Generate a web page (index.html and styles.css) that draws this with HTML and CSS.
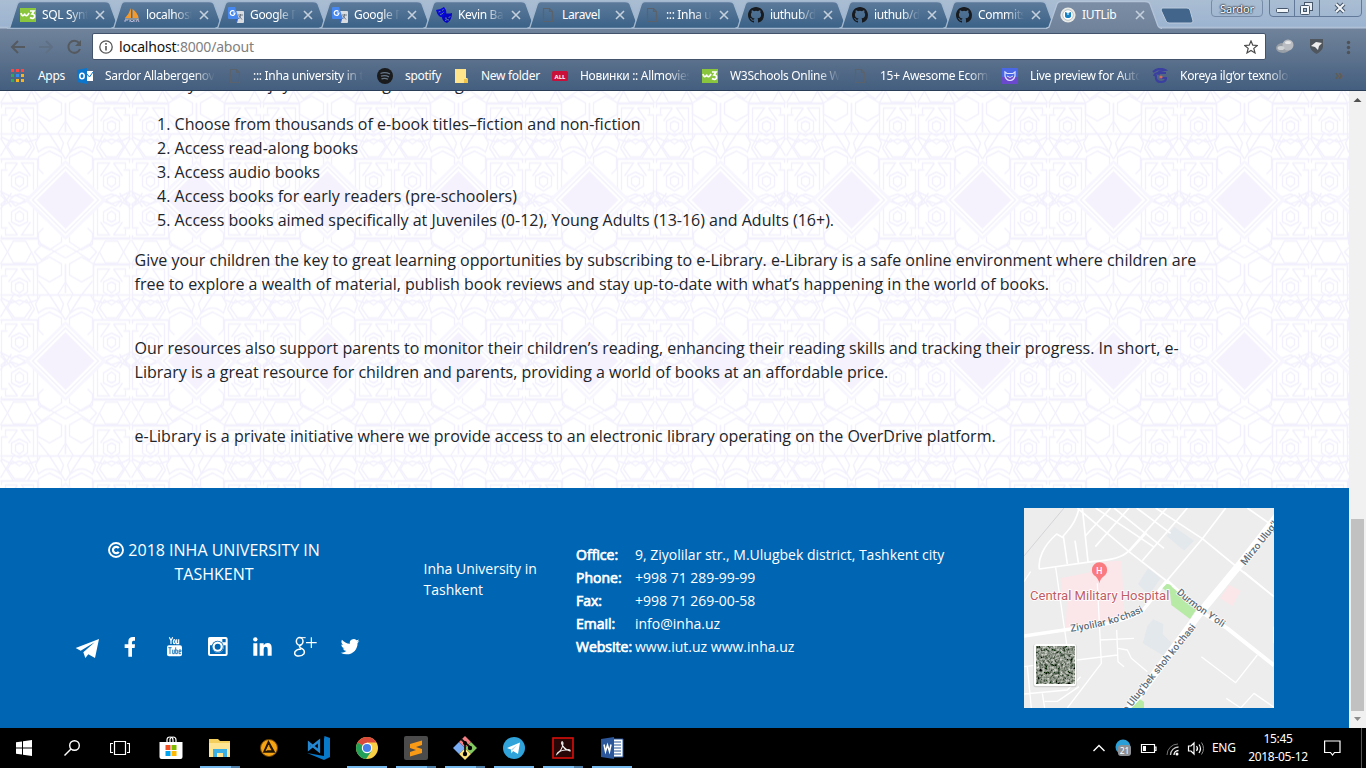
FILE: index.html
```html
<!DOCTYPE html>
<html lang="en">
<head>
<meta charset="utf-8">
<title>IUTLib</title>
<link rel="stylesheet" href="styles.css">
</head>
<body>
<svg class="defs" width="0" height="0">
  <defs>
    <linearGradient id="tabfill" x1="0" y1="0" x2="0" y2="1"><stop offset="0" stop-color="#5d7b9b"/><stop offset="1" stop-color="#3a6187"/></linearGradient>
    <linearGradient id="activefill" x1="0" y1="0" x2="0" y2="1"><stop offset="0" stop-color="#7c8ea5"/><stop offset="1" stop-color="#70839b"/></linearGradient>
    <symbol id="tab" viewBox="0 0 118 29"><path d="M1 28.5 L4 27 L11 5 Q12 1.500 15 1.500 L99 1.500 Q103 1.500 104 4 L112 26 Q113 28 116 28.500Z" fill="url(#tabfill)" stroke="#a3b8ce" stroke-width="1.300"/></symbol>
    <symbol id="tab-on" viewBox="0 0 118 29"><path d="M0 29 L3 27 L11 4 Q12 1.500 15 1.500 L99 1.500 Q103 1.500 104 4 L112 26 Q113 28 116 29Z" fill="url(#activefill)"/><path d="M0 28.500 L3 27 L11 4 Q12 1.500 15 1.500 L99 1.500 Q103 1.500 104 4 L112 26 Q113 28 116 28.500" fill="none" stroke="#b4c4d8" stroke-width="1.300"/></symbol>
    <symbol id="close" viewBox="0 0 10 10"><path d="M1 1 L9 9 M9 1 L1 9" stroke="#c3cfdc" stroke-width="1.600"/></symbol>
    <symbol id="w3" viewBox="0 0 16 16"><rect y="1" width="16" height="14" fill="#8ac53e"/><path d="M1 6 Q2 10 4 8 Q5 6 5 8 Q7 10 9 6" fill="none" stroke="#fff" stroke-width="1.700"/><path d="M10 4 H14 L12 7 Q15 7 14.500 10 Q13 12.500 10 10.500" fill="none" stroke="#fff" stroke-width="1.700"/></symbol>
    <symbol id="pma" viewBox="0 0 16 16"><path d="M7 1 V11 H1 Q5 7 7 1Z M8.500 2 Q14 6 14.500 11 H8.500Z" fill="#f29a2e"/><path d="M1 12 h14" stroke="#c8b7a4" stroke-width="1"/><path d="M1 15 v-2 h3 M6 15 v-2 l2 2 l2-2 v2 M12 15 l1.500-3 l1.500 3" stroke="#b9b7d6" fill="none"/></symbol>
    <symbol id="translate" viewBox="0 0 16 16"><path d="M7 4 H15 Q16 4 16 5 V15 Q16 16 15 16 H9Z" fill="#d9dce0"/><path d="M1 0 H7 L11 12 H1 Q0 12 0 11 V1 Q0 0 1 0Z" fill="#4687f0"/><path d="M10 12 L9 16 L7.500 12Z" fill="#2b5fc0"/><path d="M6.500 4.500 A2.400 2.400 0 1 0 7 6 H5" fill="none" stroke="#fff" stroke-width="1.200"/><path d="M10 8 h5 M12.500 7 v1 Q12.500 11 10.500 12 M11 9 L14 12.500" fill="none" stroke="#68727e" stroke-width=".9"/></symbol>
    <symbol id="masks" viewBox="0 0 16 16"><path d="M0 3 Q4 3 8 0 Q12 5 9 10 Q5 11 3 9 Q1 7 0 3Z" fill="#0808d8"/><path d="M9 6 Q12 7 16 6 Q16 13 11 16 Q6 14 6 10 Q9 10 9 6Z" fill="#0404c2"/><path d="M2.500 5 l2-.6 M6 3.500 l1.600-1 M4 7.500 Q6 7.500 7.500 5.500 M9 11 l2 .3 M12.500 10.500 l2-.8 M9 13.500 q2-1.500 4-.5" stroke="#5c7d9e" stroke-width="1" fill="none"/></symbol>
    <symbol id="page" viewBox="0 0 16 16"><path d="M3.500 1.500 H9.500 L12.500 4.500 V14.500 H3.500Z M9.500 1.500 V4.500 H12.500" fill="none" stroke="#5a636d" stroke-width="1.200"/></symbol>
    <symbol id="github" viewBox="0 0 16 16"><path d="M8 0C3.580 0 0 3.580 0 8c0 3.540 2.290 6.530 5.470 7.590.4.070.55-.17.55-.38 0-.19-.01-.82-.01-1.490-2.010.37-2.530-.49-2.690-.94-.09-.23-.48-.94-.82-1.130-.28-.15-.68-.52-.01-.53.63-.01 1.080.58 1.230.82.72 1.210 1.870.87 2.330.66.07-.52.28-.87.51-1.070-1.780-.2-3.640-.89-3.640-3.950 0-.87.31-1.590.82-2.150-.08-.2-.36-1.020.08-2.120 0 0 .67-.21 2.200.82a7.600 7.600 0 0 1 4 0c1.530-1.040 2.200-.82 2.200-.82.44 1.100.16 1.920.08 2.120.51.56.82 1.270.82 2.150 0 3.070-1.870 3.750-3.650 3.950.29.25.54.73.54 1.480 0 1.070-.01 1.930-.01 2.200 0 .21.15.46.55.38A8 8 0 0 0 16 8c0-4.420-3.580-8-8-8z" fill="#171a1e"/></symbol>
    <symbol id="iut" viewBox="0 0 16 16"><circle cx="8" cy="8" r="7.600" fill="#e9e9e6"/><circle cx="8" cy="8" r="5.300" fill="#fff" stroke="#b7c0c4"/><path d="M5 5 L8 6 L11 5 V9 Q11 11 8 11 Q5 11 5 9Z" fill="#1682c4"/><path d="M8 5v3" stroke="#fff"/></symbol>
    <pattern id="girih" width="131" height="161" patternUnits="userSpaceOnUse" patternTransform="translate(0 28.500)">
      <g transform="translate(65.500 80.500)" fill="none" stroke="#f2f0fc" stroke-width="1.400">
        <g id="row">
          <g id="gq">
            <path d="M4 -97 L4 -86 L16 -79 L28 -86 V-97 L16 -104Z"/>
            <path d="M7 -66 H25 L30 -57 L27 -48 Q16 -58 5 -48 L2 -57Z"/>
            <path d="M4 -35 V-43 L16 -49 L27 -43 V-31 L22 -26 M4 37 V42 L16 50 L27 44 V33 L22 28"/>
            <path d="M34 52 L40 41 H52 L58 52 L52 63 H40Z M34 -53 L39 -61 L46 -56 L53 -61 L58 -53 L51 -43 H41Z"/>
            <g id="box"><path d="M46 -28 L54 -24 V-14 L46 -9 L38 -14 V-24Z M46 -24 L50 -22 V-16 L46 -13 L42 -16 V-22Z M28 -6 V-41 H64 V-37 M64 -5 V-30 H58 M32 -10 V-37 H44 L35 -24 M48 -37 H60 V-31 M57 -24 L48 -37 M28 -6 L38 -3 L46 -6 L54 -3 L64 -8"/></g>
            <use href="#box" transform="scale(1 -1) translate(0 2)"/>
            <use href="#box" transform="translate(0 -55)"/>
            <path d="M0 -66 H65 M0 -41 L7 -52 L16 -66 L27 -80 M0 -79 L8 -66 M28 -41 H65 M28 38 H65 M28 64 H65 M0 -97 V-68 M28 38 L24 45 L31 52 L24 60 L12 52 L0 45 M0 58 L24 44 M28 64 L34 52 M58 52 L65 40 M58 52 L65 64 M31 -52 L38 -66 M31 -52 L38 -41 M52 -41 L65 -62 M52 -66 L65 -44"/>
            <path d="M40 0 L50 -5 L56 0 L50 6Z M54 -7 L65 9 M54 7 L65 -9 M60 0 l5 -5 M60 0 l5 5"/>
          </g>
          <use href="#gq" transform="scale(-1 1)"/>
        </g>
        <use href="#row" transform="translate(0 161)"/>
        <path d="M-41 0 L0 -40 L41 0 L0 40Z" fill="#f7f5fe" stroke="none"/>
        <path d="M-35 0 L0 -35 L35 0 L0 35Z" fill="#fff" stroke="#fff" stroke-width="2"/>
        <path d="M-33 0 L0 -33 L33 0 L0 33Z" fill="#fff"/>
        <path d="M-29 0 L0 -29 L29 0 L0 29Z" fill="#f5f2fe" stroke="none"/>
      </g>
    </pattern>
  </defs>
</svg>

<header class="browser">
  <div class="tabstrip">
    <div class="tab"><svg class="shape"><use href="#tab"/></svg><svg class="fav"><use href="#w3"/></svg><span class="t">SQL Syntax</span><svg class="x"><use href="#close"/></svg></div>
    <div class="tab"><svg class="shape"><use href="#tab"/></svg><svg class="fav"><use href="#pma"/></svg><span class="t">localhost</span><svg class="x"><use href="#close"/></svg></div>
    <div class="tab"><svg class="shape"><use href="#tab"/></svg><svg class="fav"><use href="#translate"/></svg><span class="t">Google П</span><svg class="x"><use href="#close"/></svg></div>
    <div class="tab"><svg class="shape"><use href="#tab"/></svg><svg class="fav"><use href="#translate"/></svg><span class="t">Google П</span><svg class="x"><use href="#close"/></svg></div>
    <div class="tab"><svg class="shape"><use href="#tab"/></svg><svg class="fav"><use href="#masks"/></svg><span class="t">Kevin Bac</span><svg class="x"><use href="#close"/></svg></div>
    <div class="tab"><svg class="shape"><use href="#tab"/></svg><svg class="fav"><use href="#page"/></svg><span class="t whole">Laravel</span><svg class="x"><use href="#close"/></svg></div>
    <div class="tab"><svg class="shape"><use href="#tab"/></svg><svg class="fav"><use href="#page"/></svg><span class="t">::: Inha un</span><svg class="x"><use href="#close"/></svg></div>
    <div class="tab"><svg class="shape"><use href="#tab"/></svg><svg class="fav"><use href="#github"/></svg><span class="t">iuthub/db</span><svg class="x"><use href="#close"/></svg></div>
    <div class="tab"><svg class="shape"><use href="#tab"/></svg><svg class="fav"><use href="#github"/></svg><span class="t">iuthub/db</span><svg class="x"><use href="#close"/></svg></div>
    <div class="tab"><svg class="shape"><use href="#tab"/></svg><svg class="fav"><use href="#github"/></svg><span class="t">Commits</span><svg class="x"><use href="#close"/></svg></div>
    <div class="tab on"><svg class="shape"><use href="#tab-on"/></svg><svg class="fav"><use href="#iut"/></svg><span class="t whole">IUTLib</span><svg class="x"><use href="#close"/></svg></div>
    <svg class="newtab" width="34" height="18"><path d="M2 1 H27 Q29 1 30 3 L33 14 Q33 16 31 16 H9 Q7 16 6 14 L1 3Z" fill="#41658b" stroke="#bccbdc"/></svg>
    <div class="user">Sardor</div>
    <svg class="winbtns" width="94" height="18">
      <path d="M.5 0 V13 Q.5 16.500 4 16.500 H89 Q92.500 16.500 92.500 13 V0 M25.500 0 V16 M50.500 0 V16" fill="none" stroke="#63799a"/>
      <rect x="7.500" y="8.500" width="12" height="4" rx="1" fill="#f3f6f9" stroke="#46566b"/>
      <rect x="35.500" y="2.500" width="8" height="8" fill="#e9eff5" stroke="#46566b"/><rect x="31.500" y="5.500" width="9" height="9" rx="1" fill="#f3f6f9" stroke="#46566b"/><rect x="34.500" y="8.500" width="3" height="3" fill="#9db2cb" stroke="#46566b"/>
      <path d="M67 4 L75 12 M75 4 L67 12" stroke="#46566b" stroke-width="4"/><path d="M67 4 L75 12 M75 4 L67 12" stroke="#f3f6f9" stroke-width="2"/>
    </svg>
  </div>
  <div class="toolbar">
    <svg class="nav" width="92" height="34" fill="none" stroke-width="2"><path d="M25 19 H12 M18 13 L12 19 L18 25" stroke="#555a60"/><path d="M39 19 H52 M46 13 L52 19 L46 25" stroke="#5f7085"/><path d="M79 15 A6 6 0 1 0 80 21" stroke="#555a60"/><path d="M81 12 V18 H75Z" fill="#555a60"/></svg>
    <div class="omnibox">
      <svg width="14" height="14"><circle cx="7" cy="7" r="6.200" fill="none" stroke="#555" stroke-width="1.300"/><path d="M7 6 V10.500 M7 3 V4.700" stroke="#555" stroke-width="1.600"/></svg>
      <span class="url">localhost<i>:8000/about</i></span>
      <svg width="14" height="14"><path d="M7 1 L8.800 5.200 L13.300 5.500 L9.800 8.400 L11 12.900 L7 10.400 L3 12.900 L4.200 8.400 L.7 5.500 L5.200 5.200Z" fill="none" stroke="#4a4a4a" stroke-width="1.200"/></svg>
    </div>
    <svg class="ext" width="100" height="34"><ellipse cx="17" cy="20" rx="7" ry="5" fill="#999fa6"/><circle cx="22" cy="17" r="5.500" fill="#b9bcc0"/><ellipse cx="22" cy="14.500" rx="3" ry="1.600" fill="#e6e7e8"/><ellipse cx="15" cy="20" rx="3.500" ry="2" fill="#d0d3d6"/><path d="M44 11 H57 V19 Q56 23 50.500 26 Q45 23 44 19Z" fill="#4f565e"/><path d="M45 18 L50 14 L56 15 L53 18 L52 22 L49 19Z" fill="#eee"/><g fill="#4f5256"><circle cx="82.500" cy="14.500" r="1.700"/><circle cx="82.500" cy="19.500" r="1.700"/><circle cx="82.500" cy="24.500" r="1.700"/></g></svg>
  </div>
  <nav class="bookmarks">
    <a class="bm w-apps"><svg class="fav"><g transform="translate(1 1)"><path d="M0 0h3v3H0z M5 0h3v3H5z M10 0h3v3h-3z" fill="#f44"/><path d="M0 5h3v3H0z M0 10h3v3H0z" fill="#35a853"/><path d="M5 5h3v3H5z" fill="#2f8df5"/><path d="M10 5h3v3h-3z M5 10h3v3H5z M10 10h3v3h-3z" fill="#f9b51c"/></g></svg><span class="whole">Apps</span></a>
    <a class="bm"><svg class="fav"><path d="M9 3h7v10H9z" fill="#fff"/><path d="M9 5 L12.500 9 L16 4" stroke="#0c76cc" fill="none"/><path d="M0 2 L10 0 V16 L0 14Z" fill="#0c76cc"/><ellipse cx="5" cy="8" rx="2.200" ry="2.800" fill="none" stroke="#fff" stroke-width="1.500"/></svg><span>Sardor Allabergenov</span></a>
    <a class="bm w-inha"><svg class="fav"><use href="#page"/></svg><span>::: Inha university in tas</span></a>
    <a class="bm w-spot"><svg class="fav"><circle cx="8" cy="8" r="8" fill="#191b1d"/><path d="M3.500 5.500 Q8 3.700 13 6 M4 8.200 Q8 6.800 12 8.800 M4.500 10.800 Q8 9.700 11 11.300" fill="none" stroke="#687788" stroke-width="1.300"/></svg><span class="whole">spotify</span></a>
    <a class="bm w-fold"><svg class="fav"><path d="M0 1 H11 V10 H12.500 V15 H0Z" fill="#ffe48b"/><path d="M9 11h4v4H9z" fill="#efc34a"/></svg><span class="whole">New folder</span></a>
    <a class="bm"><svg class="fav"><rect y="3" width="16" height="10" rx="1.500" fill="#c8103a"/><text x="8" y="10.500" text-anchor="middle" class="alltxt">ALL</text></svg><span>Новинки :: Allmovies</span></a>
    <a class="bm"><svg class="fav"><use href="#w3"/></svg><span>W3Schools Online We</span></a>
    <a class="bm"><svg class="fav"><use href="#page"/></svg><span>15+ Awesome Ecomm</span></a>
    <a class="bm"><svg class="fav"><rect width="16" height="16" fill="#4a68e6"/><path d="M0 9h16v7H0z" fill="#6b49cf"/><path d="M3 4 L5 5.500 H11 L13 4 V8 Q12 12 8 12.500 Q4 12 3 8Z" fill="none" stroke="#dde2ff" stroke-width="1.200"/><path d="M5 8 Q8 11 11 8" stroke="#dde2ff" fill="none"/></svg><span>Live preview for Autop</span></a>
    <a class="bm w-kor"><svg class="fav"><path d="M1 4 Q7 -1 13 2 Q7 3 6 5 H14 M2 8 Q3 4 8 6 M4 7 Q3 14 9 14 Q14 14 14 10 H8" fill="none" stroke="#3a3fa0" stroke-width="2.200"/><circle cx="9" cy="9" r="1.600" fill="#d66a55"/></svg><span>Koreya ilg‘or texnolog</span></a>
    <b class="more">»</b>
  </nav>
</header>

<main class="viewport">
  <div class="page">
    <section class="content">
      <svg class="bg" width="1349" height="397"><rect width="1349" height="397" fill="url(#girih)"/></svg>
      <div class="text">
        <p class="cut">Online you can enjoy the following advantages:</p>
        <ol>
          <li>Choose from thousands of e-book titles–fiction and non-fiction</li>
          <li>Access read-along books</li>
          <li>Access audio books</li>
          <li>Access books for early readers (pre-schoolers)</li>
          <li>Access books aimed specifically at Juveniles (0-12), Young Adults (13-16) and Adults (16+).</li>
        </ol>
        <p>Give your children the key to great learning opportunities by subscribing to e-Library. e-Library is a safe online environment where children are<br>free to explore a wealth of material, publish book reviews and stay up-to-date with what’s happening in the world of books.</p>
        <p>Our resources also support parents to monitor their children’s reading, enhancing their reading skills and tracking their progress. In short, e-<br>Library is a great resource for children and parents, providing a world of books at an affordable price.</p>
        <p>e-Library is a private initiative where we provide access to an electronic library operating on the OverDrive platform.</p>
      </div>
    </section>
    <footer class="footer">
      <div class="f-left">
        <div class="copy"><svg width="16" height="16" viewBox="0 0 16 16"><circle cx="8" cy="8" r="7" fill="none" stroke="#fff" stroke-width="1.900"/><path d="M10.800 6.200 A3.200 3.200 0 1 0 10.800 9.800" fill="none" stroke="#fff" stroke-width="2.200"/></svg> 2018 INHA UNIVERSITY IN<br>TASHKENT</div>
        <svg class="social" width="300" height="24" viewBox="45 315 900 72" fill="#fff">
          <path d="M47 354 L117 327 L105 384 L85 373 L76 384 L70 367 L104 337 L62 362Z"/>
          <path d="M205 380 V354 H194 V343 H205 V335 Q205 321 219 321 H225 V332 H220 Q216 332 216 337 V343 H225 L224 354 H216 V380Z"/>
          <g fill="none" stroke="#fff" stroke-width="3.500"><path d="M328 322 L333 332 L338 322 M333 331 V342"/><ellipse cx="343" cy="335" rx="3" ry="6"/><path d="M350 328 V341 H356 V328"/></g>
          <rect x="321" y="346" width="45" height="33" rx="6"/>
          <path d="M325 353 H335 M330 353 V372 M338 359 V371 H343 V359 M347 352 V371 H352 V360 H347 M363 371 H357 V360 H363 V365 H357" fill="none" stroke="#0066b3" stroke-width="2.500"/>
          <path fill-rule="evenodd" d="M449 321 H497 Q503 321 503 327 V372 Q503 378 497 378 H450 Q444 378 444 372 V327 Q444 321 449 321Z M487 327 V337 H497 V327Z M450 346 V372 H497 V346 H491 A18 18 0 1 1 456 346Z"/><circle cx="473" cy="350" r="18" fill="#0066b3"/><circle cx="473" cy="350" r="15.500"/><circle cx="473" cy="350" r="9" fill="#0066b3"/>
          <circle cx="586" cy="328" r="6.500"/><path d="M580 340 H592 V377 H580Z M599 340 H611 V346 Q615 339 623 339 Q635 339 635 354 V377 H623 V357 Q623 350 617 350 Q611 350 611 357 V377 H599Z"/>
          <g fill="none" stroke="#fff"><ellipse cx="719" cy="334" rx="10" ry="11.500" stroke-width="4.500"/><path d="M718 323 H737" stroke-width="3"/><path d="M724 344 Q712 350 726 356 Q736 362 732 371 Q724 380 712 378 Q701 375 705 365 Q711 357 724 357" stroke-width="4.500"/><path d="M738 338 H770 M754 322 V354" stroke-width="3.500"/></g>
          <path transform="translate(842 322) scale(2.350)" d="M23.950 4.570a10 10 0 0 1-2.820.78 4.960 4.960 0 0 0 2.160-2.720c-.95.550-2 .96-3.130 1.180a4.920 4.920 0 0 0-8.380 4.480C7.690 8.100 4.070 6.130 1.640 3.160a4.820 4.820 0 0 0-.67 2.480c0 1.710.87 3.210 2.190 4.100a4.900 4.900 0 0 1-2.230-.62v.06a4.920 4.920 0 0 0 3.950 4.830 5 5 0 0 1-2.210.08 4.940 4.940 0 0 0 4.600 3.420A9.870 9.870 0 0 1 0 19.540a13.990 13.990 0 0 0 7.550 2.210c9.050 0 14-7.500 14-13.980 0-.21 0-.42-.02-.63a9.940 9.940 0 0 0 2.420-2.570z"/>
        </svg>
      </div>
      <div class="f-name">Inha University in<br>Tashkent</div>
      <dl class="f-contact">
        <dt>Office:</dt><dd>9, Ziyolilar str., M.Ulugbek district, Tashkent city</dd>
        <dt>Phone:</dt><dd>+998 71 289-99-99</dd>
        <dt>Fax:</dt><dd>+998 71 269-00-58</dd>
        <dt>Email:</dt><dd>info@inha.uz</dd>
        <dt>Website:</dt><dd>www.iut.uz www.inha.uz</dd>
      </dl>
      <svg class="map" width="250" height="200" viewBox="30 24 750 600">
        <defs><filter id="sat" x="0" y="0" width="1" height="1"><feTurbulence type="fractalNoise" baseFrequency=".13" numOctaves="3" seed="4"/><feColorMatrix values="1.300 0 0 0 -.31  1.250 0 0 0 -.25  1.250 0 0 0 -.3  0 0 0 0 1"/><feComponentTransfer><feFuncR type="gamma" exponent="1.300"/><feFuncG type="gamma" exponent="1.300"/><feFuncB type="gamma" exponent="1.300"/></feComponentTransfer></filter></defs>
        <rect x="30" y="24" width="750" height="600" fill="#eeeded"/>
        <path d="M140 235 L222 218 L270 185 L322 182 L332 350 L260 372 L155 385 L160 290 H145Z" fill="#fbe6ea"/>
        <path d="M645 255 L680 272 L655 318 L618 295Z" fill="#fbe6ea"/>
        <path d="M480 80 L540 122 L510 152 L458 108Z M402 205 L440 235 L405 285 L372 252Z M418 358 L448 372 L446 402 L475 432 L450 468 L386 430 L400 378Z" fill="#e3e8ed"/>
        <path d="M150 24 L30 168" stroke="#d2d4d8" stroke-width="3"/>
        <g fill="none" stroke="#fff" stroke-width="5" stroke-linejoin="round">
          <path d="M190 24 L345 155 L458 243 M195 24 C185 80 150 100 145 112 L128 102 C85 140 72 180 76 207 L240 184 Q320 180 345 152 L458 24 M205 24 L222 185 M148 108 L160 192 M183 122 L193 188" />
          <path d="M214 108 L290 24 M244 140 L345 24 M245 24 L418 140 M300 24 L450 145 M368 24 L470 100 M385 182 L520 24 M345 155 L398 98 M425 24 L565 116 L665 198 L780 290 M565 116 L635 24 M565 116 L458 243 M700 24 L780 80"/>
          <path d="M125 202 L158 432 M250 250 L262 490 L160 624 M30 500 L310 465 M30 582 L160 570 L200 530 M158 430 L140 470 M40 500 L52 624 M258 420 L360 415 M308 390 L312 485 L330 500 M312 445 L340 450 L352 475 L400 515 M85 580 L92 624 M92 604 H130 L195 560" stroke-width="4"/>
          <path d="M562 470 L665 548 L730 465 M637 595 L680 624 M680 624 L720 580 L780 622 M780 380 V430 M30 245 L50 215 M690 215 L780 290" stroke-width="4"/>
          <path d="M30 408 L170 387 Q330 370 385 333 L458 243" stroke-width="10"/>
          <path d="M458 243 L560 335 L640 385 L780 496" stroke-width="12"/>
          <path d="M335 640 L550 348 L680 190 L790 48" stroke-width="23"/>
        </g>
        <path d="M445 265 L458 252 Q468 250 475 262 L549 325 L528 357 L472 315 L468 280Z M352 624 L378 598 L390 606 V624Z" fill="#b7eaa4"/>
        <path d="M256 250 Q252 233 240 226 A23 23 0 1 1 273 226 Q259 235 256 250Z" fill="#f97b80"/>
        <text class="m-h" x="256" y="221" text-anchor="middle">H</text>
        <text class="m-hosp" x="48" y="299" textLength="418" lengthAdjust="spacingAndGlyphs">Central Military Hospital</text>
        <defs><path id="r1" d="M170 395 Q320 376 410 323"/><path id="r2" d="M487 280 Q530 320 640 392"/><path id="r3" d="M338 640 L420 537 L575 347"/><path id="r4" d="M694 197 L800 64"/></defs>
        <g class="m-road"><text><textPath href="#r1" textLength="228">Ziyolilar ko‘chasi</textPath></text><text><textPath href="#r2" textLength="172">Durmon Y‘oli</textPath></text><text><textPath href="#r3" textLength="332">o Ulug‘bek shoh ko‘chasi</textPath></text><text><textPath href="#r4">Mirzo Ulug‘b</textPath></text></g>
        <rect x="58" y="432" width="130" height="130" rx="7" fill="#bbb" opacity=".6"/>
        <rect x="60" y="432" width="126" height="126" rx="6" fill="#fff"/>
        <rect x="66" y="438" width="115" height="114" fill="#526058" filter="url(#sat)"/>
      </svg>
    </footer>
  </div>
  <div class="scroll"><svg width="17" height="17"><path d="M4.500 11 L8.500 7 L12.500 11Z" fill="#505050"/></svg><div class="thumb"></div><svg width="17" height="17"><path d="M5 6 L8.500 10 L12 6Z" fill="#8b8b8b"/></svg></div>
</main>

<footer class="taskbar">
  <div class="sys"><svg width="16" height="16"><path d="M0 2.300 L6 1.400 V7.500 H0Z M7 1.200 L16 0 V7.500 H7Z M0 8.500 H6 V14.600 L0 13.700Z M7 8.500 H16 V16 L7 14.800Z" fill="#fff"/></svg></div>
  <div class="sys"><svg width="16" height="16" fill="none" stroke="#fff" stroke-width="1.400"><circle cx="10.500" cy="5.500" r="4.800"/><path d="M7 9 L.5 15.500"/></svg></div>
  <div class="sys tv"><svg width="20" height="16" fill="none" stroke="#fff"><path d="M4.500 1.500 H15.500 V14.500 H4.500Z M3 3.500 H.5 V12.500 H3 M17 3.500 H19.500 V12.500 H17" stroke-width="1.200"/></svg></div>
  <div class="app"><svg viewBox="0 0 24 24"><path d="M8 7 V4 Q8 1 11 1 Q14 1 14 4 V7 M11 6 V3 Q12 1 14 1 Q17 1 17 4 V7" fill="none" stroke="#fff" stroke-width="1.200"/><path d="M.5 6 H23.500 V21 Q23.500 23 21.500 23 H2.500 Q.5 23 .5 21Z" fill="#fff"/><path d="M6.500 9h5v5h-5z" fill="#f25022"/><path d="M12.500 9h5v5h-5z" fill="#7fba00"/><path d="M6.500 15h5v5h-5z" fill="#00a4ef"/><path d="M12.500 15h5v5h-5z" fill="#ffb900"/></svg></div>
  <div class="app run multi"><svg viewBox="0 0 24 24"><path d="M1 3 H10 L12 5 H22 V21 H1Z" fill="#f5cf5d"/><path d="M1 7 H22 V21 H1Z" fill="#fde593"/><path d="M5 13 H19 V21 H15 V17 H9 V21 H5Z" fill="#3aafe4"/></svg></div>
  <div class="app"><svg viewBox="0 0 24 24"><circle cx="12" cy="12" r="8.500" fill="#f7a414" stroke="#6b4300"/><path d="M11.500 6.500 L16.500 15.500 H7.500Z" fill="none" stroke="#201500" stroke-width="2.300"/><path d="M12 9 L9 15" stroke="#f7a414"/></svg></div>
  <div class="app"><svg viewBox="0 0 24 24"><path d="M1 17 L18 20 V3 L18.500 0 L24 2 V21 L18 24Z" fill="#0879c9"/><path d="M3 7 L13 15 V5 L3 13Z" fill="none" stroke="#2387d2" stroke-width="2.300"/></svg></div>
  <div class="app run"><svg viewBox="0 0 24 24"><circle cx="12" cy="12" r="11" fill="#f9cf46"/><path d="M12 12 L2.500 6.500 A11 11 0 0 1 21.500 6.500 H12Z" fill="#da4a3a"/><path d="M2.500 6.500 A11 11 0 0 0 11 23 L16.500 15 L12 12Z" fill="#22a05a"/><circle cx="12" cy="12" r="5.200" fill="#fff"/><circle cx="12" cy="12" r="4.100" fill="#477fea"/></svg></div>
  <div class="app run multi"><svg viewBox="0 0 24 24"><rect width="24" height="24" rx="2" fill="#4b4b4b"/><path d="M6 8 L18 4.500 V9 L12 11 L18 13 V17 L6 20.500 V16 L12 14 L6 12Z" fill="#f99a16"/></svg></div>
  <div class="app run multi"><svg viewBox="0 0 24 24"><path d="M12 0 L18 6 L12 12 L6 6Z" fill="#f37e83"/><path d="M6 6 L12 12 L6 18 L0 12Z" fill="#79acf2"/><path d="M18 6 L24 12 L18 18 L12 12Z" fill="#83cb60"/><path d="M12 12 L18 18 L12 24 L6 18Z" fill="#fbe27c"/><path d="M8 3 L18 12 M12 7 V18" stroke="#111" stroke-width="1.800"/><circle cx="12" cy="18" r="2.200"/><circle cx="17" cy="12" r="2.200"/><circle cx="12" cy="7" r="2"/></svg></div>
  <div class="app run"><svg viewBox="0 0 24 24"><circle cx="12" cy="12" r="11" fill="#2fa3da"/><path d="M5 12 L18 6.500 L16 18 L11 15 L9.500 17.500 L9 13.500Z" fill="#fff"/><path d="M9 13.500 L15 9 L10.500 14.500Z" fill="#b9d6e8"/></svg></div>
  <div class="app run multi"><svg viewBox="0 0 24 24"><rect x="2" y="2" width="20" height="20" fill="#260606" stroke="#d90f0a" stroke-width="1.600"/><path d="M6 18 Q12 13 12 7 Q11 4 10.500 7 Q12 13 19 15 Q20 13 14 14 Q7 15 6 18Z" fill="none" stroke="#eee" stroke-width="1.100"/></svg></div>
  <div class="app run"><svg viewBox="0 0 24 24"><path d="M12 3 H23 V21 H12Z" fill="#fff" stroke="#2b579a"/><path d="M14 6h7 M14 9h7 M14 12h7 M14 15h7 M14 18h7" stroke="#2b579a" stroke-width="1.200"/><path d="M1 3 L14 1 V23 L1 21Z" fill="#2b579a"/><path d="M4 8.500 L5.500 15.500 L7.500 9 L9.500 15.500 L11 8.500" fill="none" stroke="#fff" stroke-width="1.500"/></svg></div>
  <svg class="tray" width="120" height="40" fill="none" stroke="#fff">
    <path d="M3.500 23 L9 17.500 L14.500 23" stroke-width="1.400"/><circle cx="33" cy="19" r="7.500" fill="#2a9fd8" stroke="none"/><rect x="28" y="17" width="13" height="11" rx="3" fill="#8d9196" stroke="none"/><text x="34.500" y="26" class="badge" text-anchor="middle">21</text>
    <path d="M51.500 16.500 H64.500 V24.500 H51.500Z M64.500 19 H66 V22.500 H64.500" stroke-width="1.200"/><path d="M53 18 H56 V23 H53Z" fill="#fff" stroke="none"/>
    <path d="M77 27 A11 11 0 0 1 88 16" stroke="#777"/><path d="M80.500 27 A8 8 0 0 1 88.500 19" stroke="#ccc" stroke-width="1.300"/><path d="M84 27 A4.500 4.500 0 0 1 88.500 22.500" stroke-width="1.300"/><circle cx="87" cy="26" r="1.500" fill="#fff" stroke="none"/>
    <path d="M98.500 18 H101 L104 15 V26 L101 23 H98.500Z M106.500 18 Q108.500 20.500 106.500 23 M109 16.500 Q112 20.500 109 25" stroke-width="1.200"/><path d="M111.500 14.500 Q115.500 20.500 111.500 26.500" stroke="#888"/>
  </svg>
  <span class="lang">ENG</span>
  <div class="clock">15:45<br>2018-05-12</div>
  <svg class="note" width="17" height="17"><path d="M.6 1 H16 V12.500 H10.500 L8.500 15 L6.500 12.500 H.6Z" fill="none" stroke="#fff" stroke-width="1.200"/></svg>
  <i class="peek"></i>
</footer>
</body>
</html>
```
FILE: styles.css
```css
* { box-sizing: border-box; }
body { margin: 0; width: 1366px; height: 768px; overflow: hidden; display: flex; flex-direction: column; font-family: "Open Sans", "Noto Sans", sans-serif; }
.defs { position: absolute; }
svg { display: block; flex: none; }

.browser { height: 91px; border-bottom: 1px solid #2b3e58; color: #fff; font-family: "Noto Sans", "Open Sans", sans-serif; font-size: 12px; letter-spacing: -.35px; background: linear-gradient(#70839b 28px, #5b718c 60px, #435e7f 90px); }
.tabstrip { height: 29px; display: flex; align-items: flex-start; padding-left: 7px; background: linear-gradient(#aabdd2, #9db4d1 26px, #b4c4d8 28px, #70839b 29px); }
.tab { position: relative; width: 104px; height: 29px; display: flex; align-items: center; padding: 1px 0 0 13px; flex: none; }
.tab .shape { position: absolute; left: -1px; top: 0; width: 118px; height: 29px; }
.tab > .fav, .tab > .t, .tab > .x { position: relative; }
.tab.on { z-index: 1; }
.fav { width: 16px; height: 16px; }
.t { width: 46px; margin: -1px 0 0 6px; overflow: hidden; white-space: nowrap; -webkit-mask-image: linear-gradient(90deg, #000 60%, transparent); mask-image: linear-gradient(90deg, #000 60%, transparent); }
.t.whole { -webkit-mask-image: none; mask-image: none; }
.x { width: 10px; height: 10px; margin-left: 7px; }
.newtab { margin: 7px 0 0 9px; }
.user { margin: -2px 6px 0 17px; flex: none; width: 52px; height: 19px; border: 1px solid #758ba8; border-radius: 4px; text-align: center; line-height: 20px; font-size: 11px; letter-spacing: -.1px; text-shadow: 0 0 2px #000, 0 0 2px #000; }
.toolbar { height: 33px; display: flex; }
.nav { margin-top: -1px; }
.omnibox { width: 1174px; height: 27px; margin-top: 4px; background: #fff; border: 1px solid #43536b; border-radius: 2px; display: flex; align-items: center; padding: 0 7px 0 6px; }
.url { flex: 1; margin-left: 6px; color: #111; font-size: 14px; letter-spacing: -.2px; }
.url i { font-style: normal; color: #808080; }
.ext { margin-top: -1px; }
.bookmarks { display: flex; height: 27px; padding-left: 10px; }
.bm { display: flex; align-items: center; flex: none; width: 150px; height: 27px; white-space: nowrap; }
.bm span { margin: -1px 0 0 12px; overflow: hidden; width: 110px; letter-spacing: -.3px; -webkit-mask-image: linear-gradient(90deg, #000 calc(100% - 22px), transparent); mask-image: linear-gradient(90deg, #000 calc(100% - 22px), transparent); }
.bm span.whole { width: auto; overflow: visible; -webkit-mask-image: none; mask-image: none; }
.w-apps { width: 67px; }
.w-spot { width: 78px; }
.w-fold { width: 97px; }
.w-kor { width: 180px; }
.bm.w-inha span, .bm.w-fold span { margin-left: 10px; }
.alltxt { font: bold 6px "Open Sans", sans-serif; fill: #fff; letter-spacing: 0; }
.more { color: #635d55; font-size: 14px; line-height: 26px; margin-left: 3px; }

.viewport { height: 637px; display: flex; }
.page { width: 1349px; }
.content { position: relative; height: 397px; overflow: hidden; background: #fff; }
.bg { position: absolute; left: 0; top: 0; }
.text { position: relative; padding: 0 134.600px; margin-top: -19px; font-size: 16px; line-height: 24px; color: #212529; white-space: nowrap; }
.text p { margin: 0 0 40px; }
.text .cut { margin: 0 0 16px; }
.text ol { margin: 0 0 16px; padding-left: 40px; }
.footer { height: 240px; background: #0066b3; color: #fff; display: flex; font-size: 14px; }
.f-left { width: 423.500px; padding-top: 50px; }
.copy { width: 428px; text-align: center; font-size: 16px; line-height: 24px; }
.copy svg { display: inline-block; vertical-align: -2px; }
.social { margin: 49px 0 0 74.500px; }
.f-name { width: 152.500px; padding-top: 70px; line-height: 21px; white-space: nowrap; }
.f-contact { margin: 0; padding-top: 56px; width: 448px; display: grid; grid-template-columns: 59px 1fr; grid-auto-rows: 23px; line-height: 22px; white-space: nowrap; }
.f-contact dt { -webkit-text-stroke: .7px #fff; }
.f-contact dd { margin: 0; }
.map { margin-top: 20px; overflow: hidden; }
.m-h { font: 500 26px Roboto, sans-serif; fill: #fff; }
.m-hosp { font: 39px Roboto, sans-serif; fill: #bf5c64; stroke: #fff; stroke-width: 5px; paint-order: stroke; }
.m-road { font: 500 30px Roboto, sans-serif; fill: #5f6d78; stroke: #fff; stroke-width: 4px; paint-order: stroke; }
.scroll { width: 17px; background: #f1f1f1; display: flex; flex-direction: column; }
.thumb { width: 13px; height: 192px; margin: 411px 2px 0; background: #c1c1c1; }

.taskbar { height: 40px; background: #000; color: #fff; display: flex; font-family: "Noto Sans", "Open Sans", sans-serif; font-size: 12px; letter-spacing: -.3px; }
.sys { flex: none; width: 48px; display: flex; align-items: center; justify-content: center; }
.tv { width: 51px; padding-right: 3px; }
.app { position: relative; flex: none; width: 49px; padding: 8px 12px; }
.app svg { width: 24px; height: 24px; }
.run::after { content: ""; position: absolute; left: 4px; bottom: 0; width: 40px; height: 2px; background: #76b9ed; }
.multi::after { background: linear-gradient(90deg, #76b9ed 31px, #4f7ea6 31px); }
.tray { margin-left: 453px; }
.badge { font-size: 8.500px; fill: #fff; stroke: none; letter-spacing: 0; }
.lang { flex: none; line-height: 40px; width: 32px; margin-left: 2px; }
.clock { flex: none; width: 66px; text-align: center; line-height: 18px; padding-top: 2px; font-size: 12px; margin-left: 1px; white-space: nowrap; }
.note { margin: 12px 0 0 13px; }
.peek { width: 1px; background: #555; margin-left: 20px; }
```
